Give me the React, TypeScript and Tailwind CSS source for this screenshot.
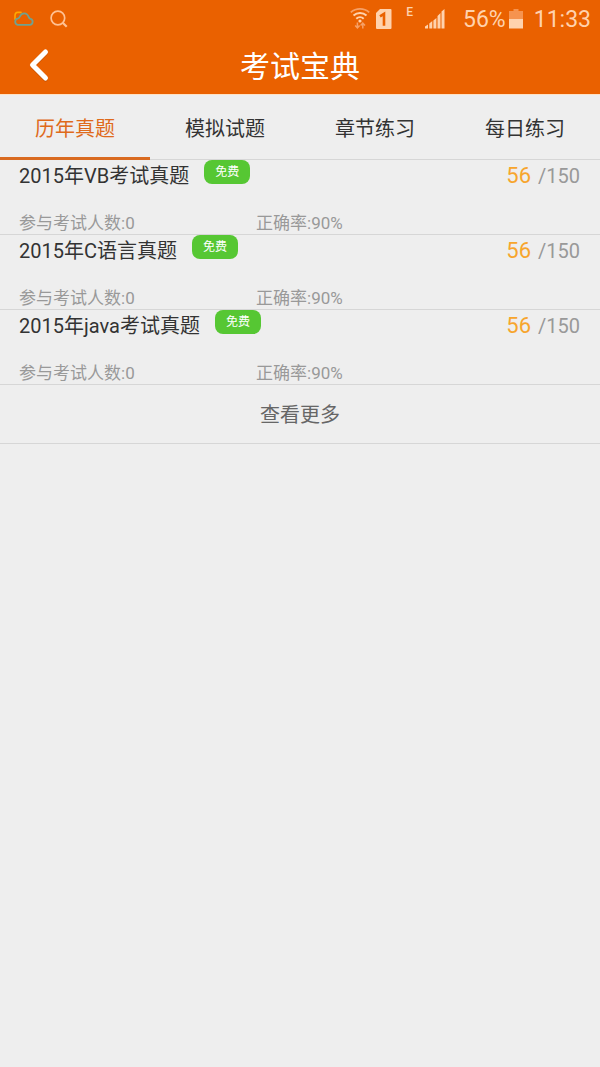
import React from "react";

interface Exam {
  title: string;
  joined: number;
  accuracy: string;
  score: number;
  total: number;
}

const tabs = ["历年真题", "模拟试题", "章节练习", "每日练习"];

const exams: Exam[] = [
  { title: "2015年VB考试真题", joined: 0, accuracy: "90%", score: 56, total: 150 },
  { title: "2015年C语言真题", joined: 0, accuracy: "90%", score: 56, total: 150 },
  { title: "2015年java考试真题", joined: 0, accuracy: "90%", score: 56, total: 150 },
];

const StatusBar: React.FC = () => {
  return (
    <div className="flex h-[38px] items-center justify-between pl-3 pr-[9px] text-[#ffd2ad]">
      <div className="flex items-center gap-4">
        {/* weather */}
        <svg className="h-5 w-[22px]" viewBox="0 0 22 20" fill="none" strokeLinecap="round" strokeLinejoin="round">
          <path d="M3 10.200V6.400A3.200 3.200 0 0 1 6 3.300L9 3.400" stroke="#ffa800" strokeWidth="1.6" />
          <path
            d="M5.800 15.800h12a3 3 0 0 0 .6-5.900c-.8-.2-1.200-.6-1.500-1.500C16 5.800 14.400 4.300 12.200 4.300S8.600 5.600 7.600 8c-.3.8-.7 1.100-1.500 1.300a3.300 3.300 0 0 0-.3 6.500z"
            stroke="#6fa290"
            strokeWidth="1.8"
          />
        </svg>
        {/* search */}
        <svg className="h-5 w-5" viewBox="0 0 20 20" fill="none" stroke="#ffc193" strokeWidth="1.7">
          <circle cx="7.900" cy="9" r="6.800" />
          <path d="M12.700 13.800l4 4" strokeWidth="2.200" />
        </svg>
      </div>

      <div className="flex items-center">
        {/* wifi */}
        <svg className="h-[22px] w-5" viewBox="0 0 20 22" fill="none">
          <path d="M.8 4.400a14 14 0 0 1 18.400 0" stroke="#f6a066" strokeWidth="1.800" />
          <path d="M3.500 7.600a9.600 9.600 0 0 1 13 0M6.300 10.700a5.400 5.400 0 0 1 7.400 0" stroke="currentColor" strokeWidth="2" />
          <circle cx="10" cy="13" r="1.600" fill="currentColor" />
          <path d="M7.400 14.500v5.300M5.200 17.600l2.200 2.400 2.200-2.400M12.800 20.500v-5.300M10.600 17.400l2.200-2.400 2.200 2.400" stroke="#f6a066" strokeWidth="1.500" />
        </svg>
        {/* sim card */}
        <svg className="ml-[6px] h-5 w-4" viewBox="0 0 16 20">
          <path d="M4 0h10.500a1 1 0 0 1 1 1v18a1 1 0 0 1-1 1H1a1 1 0 0 1-1-1V4z" fill="currentColor" />
          <path d="M4 7.400L8 4.900v11.900" fill="none" stroke="#ea6100" strokeWidth="2.600" />
        </svg>
        <span className="ml-[14px] self-start pt-0.5 text-xs leading-4 font-medium">E</span>
        {/* signal */}
        <svg className="ml-3 h-5 w-5" viewBox="0 0 20 20" fill="currentColor">
          <path d="M0 19.500v-2l3-2v4zM4.300 19.500v-5l3-2.500v7.500zM8.400 19.500v-8l3-2.500v10.500zM12.500 19.500V7l3-3v15.500zM16.500 19.500V2.500l3-2.500v19.500z" />
        </svg>
        <span className="ml-[18px] pt-0.5 text-[23px] leading-8">56%</span>
        {/* battery */}
        <svg className="ml-[3px] h-5 w-[14px]" viewBox="0 0 14 20">
          <path d="M4.500 0h5v2H14v8H0V2h4.500z" fill="#f6934f" />
          <path d="M0 10h14v9.500H0z" fill="currentColor" />
        </svg>
        <span className="ml-[11px] pt-0.5 text-[23px] leading-8">11:33</span>
      </div>
    </div>
  );
};

const Header: React.FC = () => {
  return (
    <header className="bg-[#ea6100]">
      <StatusBar />
      <div className="grid h-14 grid-cols-[80px_1fr_80px] items-center">
        <button type="button" aria-label="返回" className="flex h-14 items-center pl-7">
          <svg className="h-9 w-6" viewBox="0 0 24 36" fill="none" strokeLinecap="round" strokeLinejoin="round">
            <path d="M17.500 5L4.500 18l13 13" stroke="#c85200" strokeWidth="5" />
            <path d="M17.500 4L4.500 17l13 13" stroke="#fff" strokeWidth="5" />
          </svg>
        </button>
        <h1 className="pt-0.5 text-center text-[30px] leading-9 text-white">考试宝典</h1>
      </div>
    </header>
  );
};

const ExamRow: React.FC<{ exam: Exam }> = ({ exam }) => {
  return (
    <li className="flex h-[75px] flex-col justify-between border-b border-[#d6d6d6] pr-5 pl-[19px]">
      <div className="flex items-start justify-between">
        <div className="flex items-start gap-[15px]">
          <h2 className="text-xl leading-8 text-[#333]">{exam.title}</h2>
          <span className="rounded-lg bg-[#56c733] px-[11px] text-xs leading-6 text-white">免费</span>
        </div>
        <p className="flex gap-[7px] leading-8">
          <span className="text-[22px] text-[#f7a52d]">{exam.score}</span>
          <span className="text-xl leading-8 text-[#999]">/{exam.total}</span>
        </p>
      </div>
      <div className="grid grid-cols-[237px_1fr] text-[17px] leading-[22px] text-[#999]">
        <span>参与考试人数:{exam.joined}</span>
        <span>正确率:{exam.accuracy}</span>
      </div>
    </li>
  );
};

export default function App() {
  const [active, setActive] = React.useState(0);

  return (
    <div className="min-h-screen bg-[#eee] font-['Roboto','Noto_Sans_CJK_SC',sans-serif]">
      <Header />
      <nav className="grid h-[66px] grid-cols-4 border-t border-t-[#ffe2c4]">
        {tabs.map((tab, i) => (
          <button
            key={tab}
            type="button"
            onClick={() => setActive(i)}
            className={
              i === active
                ? "border-b-3 border-[#d96a20] pt-1.5 text-xl text-[#df6a1b]"
                : "border-b border-[#d6d6d6] pt-1.5 pb-0.5 text-xl text-[#333]"
            }
          >
            {tab}
          </button>
        ))}
      </nav>
      <ul>
        {exams.map((exam) => (
          <ExamRow key={exam.title} exam={exam} />
        ))}
      </ul>
      <button type="button" className="h-[59px] w-full border-b border-[#d6d6d6] pt-0.5 text-xl text-[#666]">
        查看更多
      </button>
    </div>
  );
}
